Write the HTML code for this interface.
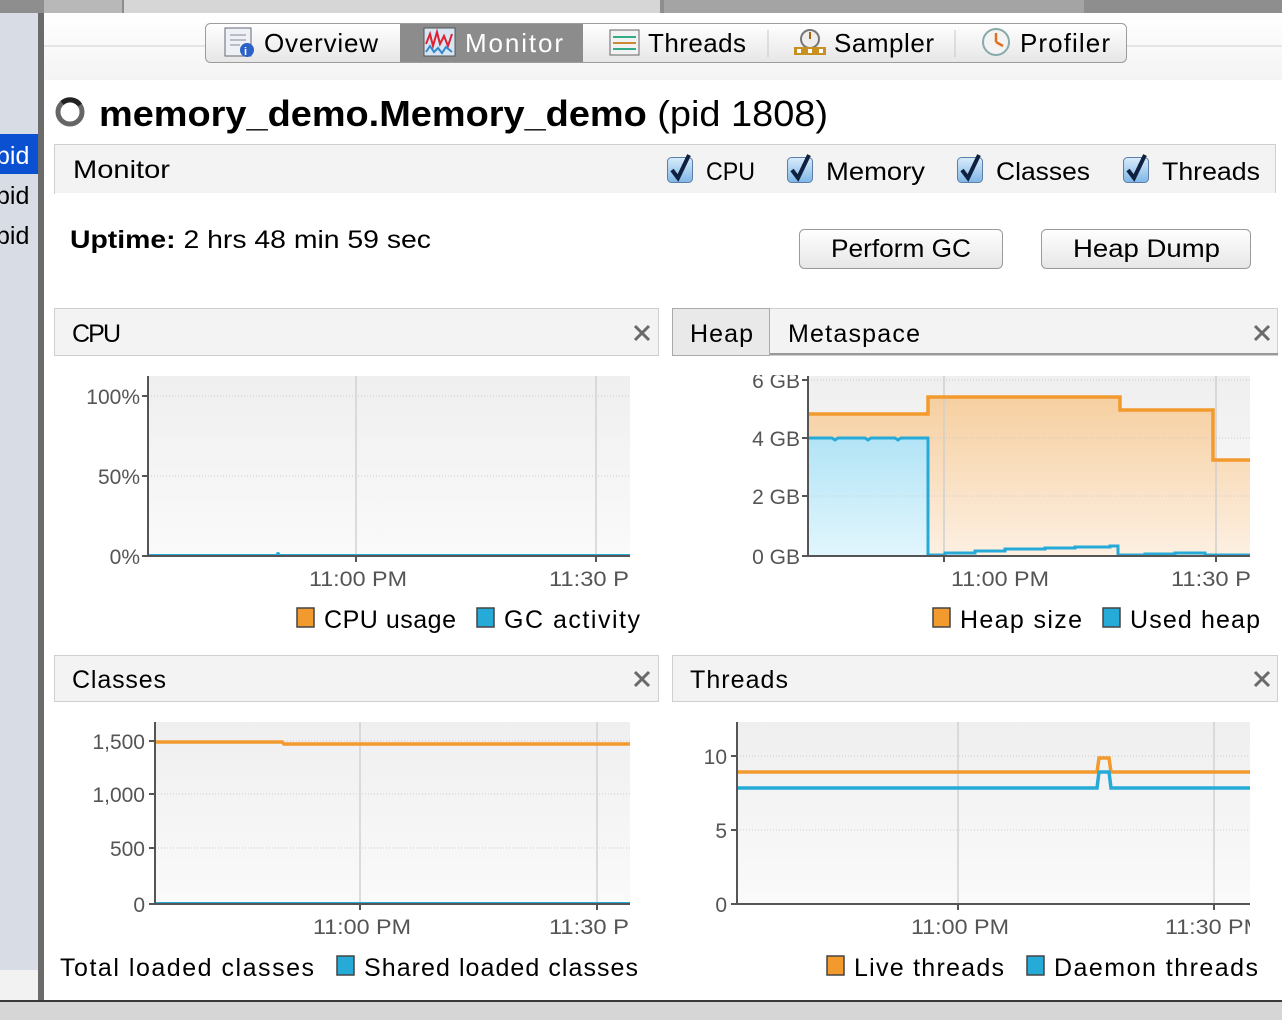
<!DOCTYPE html>
<html><head><meta charset="utf-8"><style>
html,body{margin:0;padding:0;width:1282px;height:1020px;overflow:hidden;background:#fff}
svg{display:block}
text{font-family:"Liberation Sans",sans-serif}
</style></head><body>
<svg width="1282" height="1020" viewBox="0 0 1282 1020" xmlns="http://www.w3.org/2000/svg">
<defs>
<linearGradient id="plotbg" x1="0" y1="0" x2="0" y2="1"><stop offset="0" stop-color="#efefef"/><stop offset="1" stop-color="#fafafa"/></linearGradient>
<linearGradient id="heapfill" x1="0" y1="0" x2="0" y2="1"><stop offset="0" stop-color="#f6cfa0"/><stop offset="1" stop-color="#fdf0e2"/></linearGradient>
<linearGradient id="usedfill" x1="0" y1="0" x2="0" y2="1"><stop offset="0" stop-color="#b2e4f6"/><stop offset="1" stop-color="#e2f6fd"/></linearGradient>
<linearGradient id="btn" x1="0" y1="0" x2="0" y2="1"><stop offset="0" stop-color="#ffffff"/><stop offset="1" stop-color="#e6e6e6"/></linearGradient>
<linearGradient id="cb" x1="0" y1="0" x2="0" y2="1"><stop offset="0" stop-color="#d8ecfb"/><stop offset="1" stop-color="#7fb6e6"/></linearGradient>
<linearGradient id="topbg" x1="0" y1="0" x2="0" y2="1"><stop offset="0" stop-color="#ffffff"/><stop offset="1" stop-color="#f4f4f4"/></linearGradient>
</defs>
<rect x="0" y="0" width="38" height="1020" fill="#d8dde5"/>
<rect x="0" y="970" width="38" height="30" fill="#f2f2f2"/>
<rect x="0" y="134" width="38" height="40" fill="#0a50d0"/>
<text x="-4" y="164" font-size="25" fill="#fff">pid</text>
<text x="-4" y="204" font-size="25" fill="#000">pid</text>
<text x="-4" y="244" font-size="25" fill="#000">pid</text>
<rect x="38" y="0" width="6" height="1000" fill="#6b6b6b"/>
<rect x="0" y="0" width="1282" height="13" fill="#8e8e8e"/>
<rect x="44" y="0" width="78" height="13" fill="#b8b8b8"/>
<rect x="124" y="0" width="536" height="13" fill="#d6d6d6"/>
<rect x="664" y="0" width="420" height="13" fill="#a4a4a4"/>
<rect x="44" y="13" width="1238" height="67" fill="url(#topbg)"/>
<line x1="44" y1="46" x2="205" y2="46" stroke="#d0d0d0"/>
<line x1="1127" y1="46" x2="1282" y2="46" stroke="#d0d0d0"/>
<rect x="205.5" y="23.5" width="921" height="39" rx="5" fill="url(#btn)" stroke="#9c9c9c"/>
<rect x="400" y="24" width="183" height="38" fill="#8c8c8c"/>
<line x1="768" y1="30" x2="768" y2="57" stroke="#c8c8c8"/>
<line x1="955" y1="30" x2="955" y2="57" stroke="#c8c8c8"/>
<rect x="225" y="28" width="26" height="28" fill="#eef1f5" stroke="#667"/>
<line x1="230" y1="35" x2="246" y2="35" stroke="#889"/><line x1="230" y1="40" x2="246" y2="40" stroke="#889"/><line x1="230" y1="45" x2="240" y2="45" stroke="#889"/>
<circle cx="247" cy="50" r="7" fill="#2a62c8"/><text x="244" y="55" font-size="11" fill="#fff" font-weight="bold">i</text>
<rect x="424" y="28" width="31" height="28" fill="#d8e6f4" stroke="#555"/>
<path d="M426 44 L430 34 L433 46 L437 32 L440 44 L444 36 L448 46 L452 34" stroke="#d23" stroke-width="2" fill="none"/>
<path d="M426 52 L430 46 L434 52 L438 48 L442 53 L446 47 L452 52" stroke="#38c" stroke-width="2" fill="none"/>
<rect x="610" y="30" width="29" height="25" fill="#f2f2f2" stroke="#666"/>
<line x1="613" y1="37" x2="636" y2="37" stroke="#3a8" stroke-width="2"/><line x1="613" y1="43" x2="636" y2="43" stroke="#c83" stroke-width="2"/><line x1="613" y1="49" x2="636" y2="49" stroke="#3a8" stroke-width="2"/>
<circle cx="810" cy="39" r="9" fill="#eee" stroke="#777" stroke-width="2"/><line x1="810" y1="39" x2="810" y2="32" stroke="#a60" stroke-width="2"/>
<rect x="794" y="47" width="32" height="8" fill="#c89020"/><rect x="797" y="49" width="4" height="4" fill="#fff"/><rect x="808" y="49" width="4" height="4" fill="#fff"/><rect x="819" y="49" width="4" height="4" fill="#fff"/>
<circle cx="996" cy="42" r="13" fill="#f3f3f3" stroke="#8aa" stroke-width="2"/><path d="M996 42 L996 33 M996 42 L1003 46" stroke="#e07020" stroke-width="2.5" fill="none"/>
<g font-size="26" lengthAdjust="spacingAndGlyphs">
<text x="264" y="52" fill="#000" textLength="114">Overview</text>
<text x="465" y="52" fill="#fff" textLength="98">Monitor</text>
<text x="648" y="52" fill="#000" textLength="98">Threads</text>
<text x="834" y="52" fill="#000" textLength="100">Sampler</text>
<text x="1020" y="52" fill="#000" textLength="90">Profiler</text>
</g>
<circle cx="70" cy="112" r="12" fill="none" stroke="#666" stroke-width="5"/>
<path d="M62 103 A12 12 0 0 1 80 105" stroke="#222" stroke-width="5" fill="none"/>
<text x="99" y="126" font-size="36" fill="#000" textLength="729" lengthAdjust="spacingAndGlyphs"><tspan font-weight="bold">memory_demo.Memory_demo</tspan> (pid 1808)</text>
<rect x="54.5" y="144.5" width="1221" height="49" fill="#f3f3f3" stroke="#cfcfcf"/>
<rect x="55" y="193" width="1221" height="2" fill="#fff"/>
<text x="73" y="178" font-size="25" fill="#000" textLength="97" lengthAdjust="spacingAndGlyphs">Monitor</text>
<g font-size="25" fill="#000">
<g transform="translate(667,157)"><rect x="0.5" y="0.5" width="25" height="25" rx="4" fill="url(#cb)" stroke="#5c7fa8"/><path d="M5 13 L11 21 L22 -2" stroke="#102040" stroke-width="4" fill="none"/></g>
<text x="706" y="180" textLength="49" lengthAdjust="spacingAndGlyphs">CPU</text>
<g transform="translate(787,157)"><rect x="0.5" y="0.5" width="25" height="25" rx="4" fill="url(#cb)" stroke="#5c7fa8"/><path d="M5 13 L11 21 L22 -2" stroke="#102040" stroke-width="4" fill="none"/></g>
<text x="826" y="180" textLength="99" lengthAdjust="spacingAndGlyphs">Memory</text>
<g transform="translate(957,157)"><rect x="0.5" y="0.5" width="25" height="25" rx="4" fill="url(#cb)" stroke="#5c7fa8"/><path d="M5 13 L11 21 L22 -2" stroke="#102040" stroke-width="4" fill="none"/></g>
<text x="996" y="180" textLength="94" lengthAdjust="spacingAndGlyphs">Classes</text>
<g transform="translate(1123,157)"><rect x="0.5" y="0.5" width="25" height="25" rx="4" fill="url(#cb)" stroke="#5c7fa8"/><path d="M5 13 L11 21 L22 -2" stroke="#102040" stroke-width="4" fill="none"/></g>
<text x="1162" y="180" textLength="98" lengthAdjust="spacingAndGlyphs">Threads</text>
</g>
<text x="70" y="248" font-size="25" fill="#000" textLength="361" lengthAdjust="spacingAndGlyphs"><tspan font-weight="bold">Uptime:</tspan> 2 hrs 48 min 59 sec</text>
<rect x="799.5" y="229.5" width="203" height="39" rx="5" fill="url(#btn)" stroke="#9a9a9a"/>
<text x="831" y="257" font-size="25" fill="#000" textLength="140" lengthAdjust="spacingAndGlyphs">Perform GC</text>
<rect x="1041.5" y="229.5" width="209" height="39" rx="5" fill="url(#btn)" stroke="#9a9a9a"/>
<text x="1073" y="257" font-size="25" fill="#000" textLength="147" lengthAdjust="spacingAndGlyphs">Heap Dump</text>

<g stroke="#cfcfcf">
<rect x="54.5" y="308.5" width="604" height="47" fill="#f3f3f3"/>
<rect x="672.5" y="308.5" width="605" height="47" fill="#f3f3f3"/>
<rect x="672.5" y="308.5" width="97" height="47" fill="#e9e9e9" stroke="#aaa"/>
<rect x="54.5" y="655.5" width="604" height="46" fill="#f3f3f3"/>
<rect x="672.5" y="655.5" width="605" height="46" fill="#f3f3f3"/>
</g>
<line x1="770" y1="354" x2="1278" y2="354" stroke="#999" stroke-width="2"/>
<g font-size="25" fill="#000" lengthAdjust="spacingAndGlyphs">
<text x="72" y="342" textLength="49">CPU</text>
<text x="690" y="342" textLength="63">Heap</text>
<text x="788" y="342" textLength="132">Metaspace</text>
<text x="72" y="688" textLength="94">Classes</text>
<text x="690" y="688" textLength="98">Threads</text>
</g>
<g stroke="#6a6a6a" stroke-width="3">
<path d="M635 326 L649 340 M649 326 L635 340"/>
<path d="M1255 326 L1269 340 M1269 326 L1255 340"/>
<path d="M635 672 L649 686 M649 672 L635 686"/>
<path d="M1255 672 L1269 686 M1269 672 L1255 686"/>
</g>

<g font-size="21" fill="#555">
<rect x="148" y="376" width="482" height="180" fill="url(#plotbg)"/>
<g stroke="#ccc" stroke-dasharray="1 2"><line x1="148" y1="396" x2="630" y2="396"/><line x1="148" y1="476" x2="630" y2="476"/></g>
<g stroke="#d2d2d2" stroke-width="1.5"><line x1="356" y1="376" x2="356" y2="556"/><line x1="596" y1="376" x2="596" y2="556"/></g>
<line x1="149" y1="555" x2="630" y2="555" stroke="#26aad8" stroke-width="2"/>
<circle cx="278" cy="554" r="2" fill="#26aad8"/>
<path d="M148 376 V556 H630 M142 396 H148 M142 476 H148 M142 556 H148 M356 556 V562 M596 556 V562" stroke="#555" stroke-width="2" fill="none"/>
<text x="140" y="404" text-anchor="end">100%</text>
<text x="140" y="484" text-anchor="end">50%</text>
<text x="140" y="564" text-anchor="end">0%</text>
<text x="309" y="586" textLength="98" lengthAdjust="spacingAndGlyphs">11:00 PM</text>
<text x="549" y="586" textLength="80" lengthAdjust="spacingAndGlyphs">11:30 P</text>

<rect x="808" y="376" width="442" height="180" fill="url(#plotbg)"/>
<path d="M809 415 H928 V397 H1120 V410 H1213 V460 H1250 V556 H809Z" fill="url(#heapfill)"/>
<path d="M809 438 H929 V556 H809Z" fill="url(#usedfill)"/>
<g stroke="#c8c8c8" stroke-dasharray="1 2"><line x1="808" y1="380" x2="1250" y2="380"/><line x1="808" y1="438" x2="1250" y2="438"/><line x1="808" y1="496" x2="1250" y2="496"/></g>
<g stroke="#cfcfcf" stroke-width="1.5"><line x1="944" y1="376" x2="944" y2="556"/><line x1="1216" y1="376" x2="1216" y2="556"/></g>
<path d="M809 414 H928 V397 H1120 V410 H1213 V460 H1250" stroke="#f29a2e" stroke-width="3.5" fill="none"/>
<path d="M809 438 H832 L835 440 L838 438 H865 L868 440 L871 438 H895 L898 440 L901 438 H928 V555 H945 V553 H975 V551 H1005 V549 H1045 V548 H1075 V547 H1110 V546 H1118 V555 H1145 V554 H1175 V553 H1205 V555 H1250" stroke="#26aad8" stroke-width="3" fill="none"/>
<path d="M808 376 V556 H1250 M802 380 H808 M802 438 H808 M802 496 H808 M802 556 H808 M944 556 V562 M1216 556 V562" stroke="#555" stroke-width="2" fill="none"/>
<text x="800" y="388" text-anchor="end">6 GB</text>
<text x="800" y="446" text-anchor="end">4 GB</text>
<text x="800" y="504" text-anchor="end">2 GB</text>
<text x="800" y="564" text-anchor="end">0 GB</text>
<rect x="740" y="360" width="520" height="15" fill="#fff"/>
<text x="951" y="586" textLength="98" lengthAdjust="spacingAndGlyphs">11:00 PM</text>
<text x="1171" y="586" textLength="80" lengthAdjust="spacingAndGlyphs">11:30 P</text>

<rect x="155" y="722" width="475" height="182" fill="url(#plotbg)"/>
<g stroke="#ccc" stroke-dasharray="1 2"><line x1="155" y1="741" x2="630" y2="741"/><line x1="155" y1="794" x2="630" y2="794"/><line x1="155" y1="848" x2="630" y2="848"/></g>
<g stroke="#d2d2d2" stroke-width="1.5"><line x1="360" y1="722" x2="360" y2="904"/><line x1="597" y1="722" x2="597" y2="904"/></g>
<path d="M156 742 H282 L284 744 H630" stroke="#f29a2e" stroke-width="3.5" fill="none"/>
<line x1="156" y1="903" x2="630" y2="903" stroke="#26aad8" stroke-width="2"/>
<path d="M155 722 V904 H630 M149 741 H155 M149 794 H155 M149 848 H155 M149 904 H155 M360 904 V910 M597 904 V910" stroke="#555" stroke-width="2" fill="none"/>
<text x="145" y="749" text-anchor="end">1,500</text>
<text x="145" y="802" text-anchor="end">1,000</text>
<text x="145" y="856" text-anchor="end">500</text>
<text x="145" y="912" text-anchor="end">0</text>
<text x="313" y="934" textLength="98" lengthAdjust="spacingAndGlyphs">11:00 PM</text>
<text x="549" y="934" textLength="80" lengthAdjust="spacingAndGlyphs">11:30 P</text>

<rect x="737" y="722" width="513" height="182" fill="url(#plotbg)"/>
<g stroke="#ccc" stroke-dasharray="1 2"><line x1="737" y1="756" x2="1250" y2="756"/><line x1="737" y1="830" x2="1250" y2="830"/></g>
<g stroke="#d2d2d2" stroke-width="1.5"><line x1="958" y1="722" x2="958" y2="904"/><line x1="1214" y1="722" x2="1214" y2="904"/></g>
<path d="M738 772 H1097 L1099 758 H1109 L1111 772 H1250" stroke="#f29a2e" stroke-width="3.5" fill="none"/>
<path d="M738 788 H1097 L1099 772 H1109 L1111 788 H1250" stroke="#26aad8" stroke-width="3.5" fill="none"/>
<path d="M737 722 V904 H1250 M731 756 H737 M731 830 H737 M731 904 H737 M958 904 V910 M1214 904 V910" stroke="#555" stroke-width="2" fill="none"/>
<text x="727" y="764" text-anchor="end">10</text>
<text x="727" y="838" text-anchor="end">5</text>
<text x="727" y="912" text-anchor="end">0</text>
<text x="911" y="934" textLength="98" lengthAdjust="spacingAndGlyphs">11:00 PM</text>
<text x="1165" y="934" textLength="98" lengthAdjust="spacingAndGlyphs">11:30 PM</text>
<rect x="1250" y="910" width="32" height="30" fill="#fff"/>
</g>

<g font-size="25" fill="#000" lengthAdjust="spacingAndGlyphs">
<rect x="297" y="608" width="17" height="19" fill="#f29a2e" stroke="#444" stroke-width="1.5"/>
<text x="324" y="628" textLength="132">CPU usage</text>
<rect x="477" y="608" width="17" height="19" fill="#26aad8" stroke="#444" stroke-width="1.5"/>
<text x="504" y="628" textLength="136">GC activity</text>
<rect x="933" y="608" width="17" height="19" fill="#f29a2e" stroke="#444" stroke-width="1.5"/>
<text x="960" y="628" textLength="122">Heap size</text>
<rect x="1103" y="608" width="17" height="19" fill="#26aad8" stroke="#444" stroke-width="1.5"/>
<text x="1130" y="628" textLength="130">Used heap</text>
<text x="60" y="976" textLength="254">Total loaded classes</text>
<rect x="337" y="956" width="17" height="19" fill="#26aad8" stroke="#444" stroke-width="1.5"/>
<text x="364" y="976" textLength="274">Shared loaded classes</text>
<rect x="827" y="956" width="17" height="19" fill="#f29a2e" stroke="#444" stroke-width="1.5"/>
<text x="854" y="976" textLength="150">Live threads</text>
<rect x="1027" y="956" width="17" height="19" fill="#26aad8" stroke="#444" stroke-width="1.5"/>
<text x="1054" y="976" textLength="204">Daemon threads</text>
</g>

<rect x="0" y="1000" width="1282" height="2" fill="#3a3a3a"/>
<rect x="0" y="1002" width="1282" height="18" fill="#d6d6d6"/>
</svg>
</body></html>
